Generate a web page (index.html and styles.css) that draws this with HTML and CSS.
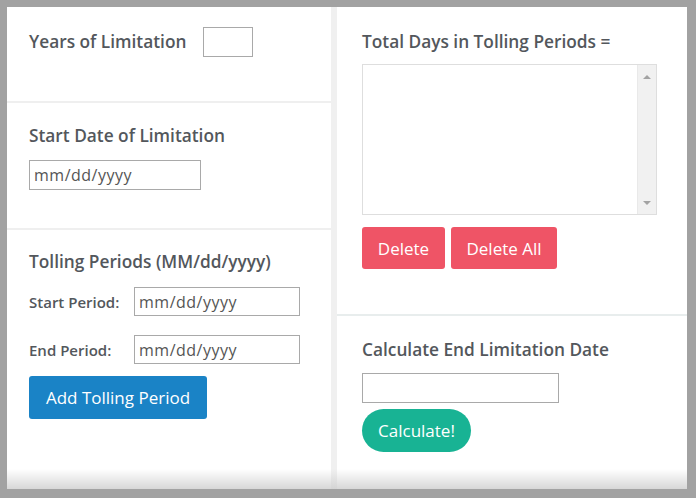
FILE: index.html
```html
<!DOCTYPE html>
<html>
<head>
<meta charset="utf-8">
<link rel="stylesheet" href="styles.css">
</head>
<body>
<div class="frame">
  <div class="board">
    <div class="col col-left">
      <section class="sec sec-years">
        <div class="inline-row">
          <h3 class="heading">Years of Limitation</h3>
          <input class="field field-years" type="text">
        </div>
      </section>
      <section class="sec sec-start">
        <h3 class="heading">Start Date of Limitation</h3>
        <input class="field field-date" type="text" placeholder="mm/dd/yyyy">
      </section>
      <section class="sec sec-tolling">
        <h3 class="heading">Tolling Periods (MM/dd/yyyy)</h3>
        <div class="period-row">
          <label class="period-label">Start Period:</label>
          <input class="field field-period" type="text" placeholder="mm/dd/yyyy">
        </div>
        <div class="period-row period-row-end">
          <label class="period-label">End Period:</label>
          <input class="field field-period" type="text" placeholder="mm/dd/yyyy">
        </div>
        <button class="btn btn-blue">Add Tolling Period</button>
      </section>
    </div>
    <div class="col-gap"></div>
    <div class="col col-right">
      <section class="sec sec-total">
        <h3 class="heading">Total Days in Tolling Periods =</h3>
        <div class="list-box">
          <textarea class="days-list"></textarea>
          <div class="scroll-track">
            <span class="arrow arrow-up"></span>
            <span class="arrow arrow-down"></span>
          </div>
        </div>
        <div class="btn-row">
          <button class="btn btn-red btn-delete">Delete</button>
          <button class="btn btn-red btn-delete-all">Delete All</button>
        </div>
      </section>
      <section class="sec sec-calc">
        <h3 class="heading">Calculate End Limitation Date</h3>
        <input class="field field-result" type="text">
        <button class="btn btn-green">Calculate!</button>
      </section>
    </div>
  </div>
</div>
</body>
</html>
```

FILE: styles.css
```css
* { box-sizing: border-box; }
html, body { margin: 0; padding: 0; }
body {
  background: #a2a2a2;
  font-family: "Open Sans", "Liberation Sans", sans-serif;
  color: #555;
}
.frame {
  width: 696px;
  height: 498px;
  padding: 7px 9px 9px 7px;
}
.board {
  display: grid;
  grid-template-columns: 324px 6px 350px;
  height: 482px;
  background: #fff;
}
.col { display: flex; flex-direction: column; }
.col-gap {
  background: linear-gradient(to bottom, #f0f0f0 calc(100% - 20px), #d4d4d4 100%);
}
.sec { padding: 0 22px 0 22px; }
.sec-years {
  height: 96px;
  padding-top: 20px;
  border-bottom: 2px solid #efefef;
}
.sec-start {
  height: 127px;
  padding-top: 21px;
  border-bottom: 2px solid #efefef;
}
.sec-tolling, .sec-calc {
  flex: 1;
  background: linear-gradient(to bottom, #fff calc(100% - 20px), #d7d7d7 100%);
}
.sec-tolling { padding-top: 20px; }
.col-right .sec { padding-left: 25px; }
.sec-total {
  height: 309px;
  padding-top: 23px;
  border-bottom: 2px solid #e8eded;
}
.sec-calc { padding-top: 22px; }

.heading {
  margin: 0;
  font-size: 17.3px;
  line-height: 24px;
  font-weight: 600;
  color: #53575c;
}
.inline-row { display: flex; align-items: center; }
.inline-row .heading { margin-right: 17px; }

.field {
  display: block;
  border: 1px solid #a9a9a9;
  background: #fff;
  font-family: "Open Sans", "Liberation Sans", sans-serif;
  font-size: 16px;
  letter-spacing: 0.5px;
  color: #555;
  padding: 0 4px;
  outline: none;
  border-radius: 0;
}
.field::placeholder { color: #555; }
.field-years { width: 50px; height: 30px; }
.field-date { width: 172px; height: 30px; margin-top: 12px; }
.field-period { width: 166px; height: 29px; }
.field-result { width: 197px; height: 30px; margin-top: 11px; }

.period-row {
  display: flex;
  align-items: center;
  margin-top: 13px;
}
.period-row-end { margin-top: 19px; }
.period-label {
  width: 105px;
  font-size: 15px;
  font-weight: 600;
  color: #53575c;
}

.btn {
  display: block;
  border: none;
  color: #fff;
  font-family: "Open Sans", "Liberation Sans", sans-serif;
  font-size: 17px;
  font-weight: 500;
  cursor: pointer;
}
.btn-blue {
  background: #1a83c6;
  width: 178px;
  height: 43px;
  border-radius: 3px;
  margin-top: 12px;
}
.btn-row { display: flex; gap: 6px; margin-top: 12px; }
.btn-red {
  background: #ef5466;
  height: 42px;
  border-radius: 3px;
}
.btn-delete { width: 83px; }
.btn-delete-all { width: 106px; }
.btn-green {
  background: #18b394;
  width: 109px;
  height: 43px;
  border-radius: 22px;
  margin-top: 6px;
}

.list-box {
  display: flex;
  width: 295px;
  height: 151px;
  margin-top: 10px;
  border: 1px solid #dedede;
  background: #fff;
}
.days-list {
  flex: 1;
  display: block;
  border: none;
  resize: none;
  outline: none;
  padding: 2px;
  overflow: hidden;
  font-family: "Open Sans", "Liberation Sans", sans-serif;
}
.scroll-track {
  width: 19px;
  background: #f1f1f1;
  border-left: 1px solid #e9e9e9;
  display: flex;
  flex-direction: column;
  justify-content: space-between;
  align-items: center;
  padding: 10px 0 9px;
}
.arrow {
  width: 0;
  height: 0;
  border-left: 4px solid transparent;
  border-right: 4px solid transparent;
}
.arrow-up { border-bottom: 4px solid #a3a3a3; }
.arrow-down { border-top: 4px solid #a3a3a3; }
```
